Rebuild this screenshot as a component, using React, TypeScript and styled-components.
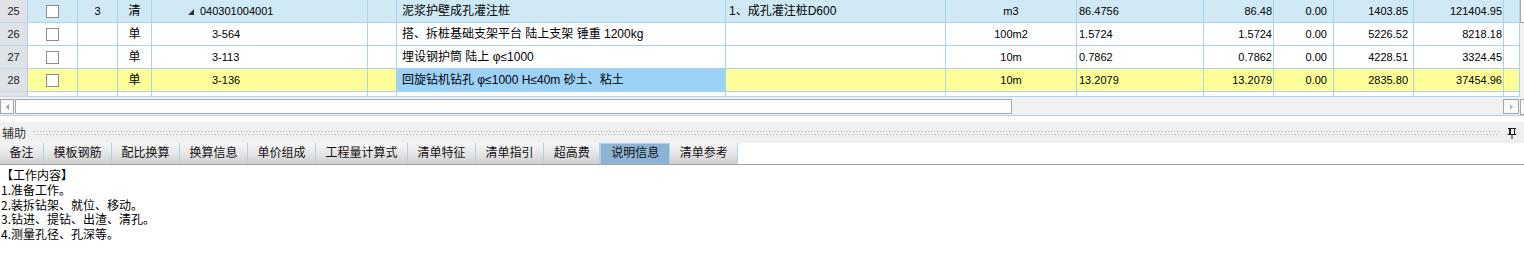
import * as React from 'react'
import styled, { createGlobalStyle, css } from 'styled-components'

type Align = 'left' | 'center' | 'right'
type RowKind = 'bill' | 'item' | 'current'

interface IRow {
  no: string
  seq?: string
  type: string
  code: string
  expand?: boolean
  name: string
  feature?: string
  unit: string
  qty: string
  amount: string
  diff: string
  price: string
  total: string
  kind: RowKind
  selectedName?: boolean
}

const ROWS: IRow[] = [
  {
    no: '25',
    seq: '3',
    type: '清',
    code: '040301004001',
    expand: true,
    name: '泥浆护壁成孔灌注桩',
    feature: '1、成孔灌注桩D600',
    unit: 'm3',
    qty: '86.4756',
    amount: '86.48',
    diff: '0.00',
    price: '1403.85',
    total: '121404.95',
    kind: 'bill'
  },
  {
    no: '26',
    type: '单',
    code: '3-564',
    name: '搭、拆桩基础支架平台 陆上支架 锤重 1200kg',
    unit: '100m2',
    qty: '1.5724',
    amount: '1.5724',
    diff: '0.00',
    price: '5226.52',
    total: '8218.18',
    kind: 'item'
  },
  {
    no: '27',
    type: '单',
    code: '3-113',
    name: '埋设钢护筒 陆上 φ≤1000',
    unit: '10m',
    qty: '0.7862',
    amount: '0.7862',
    diff: '0.00',
    price: '4228.51',
    total: '3324.45',
    kind: 'item'
  },
  {
    no: '28',
    type: '单',
    code: '3-136',
    name: '回旋钻机钻孔 φ≤1000 H≤40m 砂土、粘土',
    unit: '10m',
    qty: '13.2079',
    amount: '13.2079',
    diff: '0.00',
    price: '2835.80',
    total: '37454.96',
    kind: 'current',
    selectedName: true
  }
]

const TABS = [
  '备注',
  '模板钢筋',
  '配比换算',
  '换算信息',
  '单价组成',
  '工程量计算式',
  '清单特征',
  '清单指引',
  '超高费',
  '说明信息',
  '清单参考'
]

const NOTES = [
  '【工作内容】',
  '1.准备工作。',
  '2.装拆钻架、就位、移动。',
  '3.钻进、提钻、出渣、清孔。',
  '4.测量孔径、孔深等。'
]

const GRID_LINE = '#a9d4f1'
const COLS =
  '28px 50px 40px 34px 216px 29px 329px 220px 131px 127px 70px 60px 80px 90px 16px'

class App extends React.Component {
  public render() {
    return (
      <Layout>
        <GlobalStyle />
        <GridPanel>
          <GridBody>
            {ROWS.map(row => (
              <Row key={row.no} $kind={row.kind}>
                <HeadCell>{row.no}</HeadCell>
                <Cell $align="center">
                  <CheckBox />
                </Cell>
                <Cell $align="center" $num>
                  {row.seq}
                </Cell>
                <Cell $align="center">{row.type}</Cell>
                <Cell $pad={row.expand ? 36 : 60} $num>
                  {row.expand && <Expander />}
                  {row.code}
                </Cell>
                <Cell />
                <Cell $pad={5} $selected={row.selectedName}>
                  {row.name}
                </Cell>
                <Cell $pad={3}>{row.feature}</Cell>
                <Cell $align="center" $num>
                  {row.unit}
                </Cell>
                <Cell $pad={2} $num>
                  {row.qty}
                </Cell>
                <Cell $align="right" $pad={1} $num>
                  {row.amount}
                </Cell>
                <Cell $align="right" $pad={6} $num>
                  {row.diff}
                </Cell>
                <Cell $align="right" $pad={5} $num>
                  {row.price}
                </Cell>
                <Cell $align="right" $pad={1} $num>
                  {row.total}
                </Cell>
                <Cell />
              </Row>
            ))}
            <PartialRow $kind="item">
              <HeadCell />
              {Array.from({ length: 14 }).map((_, i) => (
                <Cell key={i} />
              ))}
            </PartialRow>
            <HScroll>
              <ScrollButton>
                <Arrow $dir="left" />
              </ScrollButton>
              <Thumb />
              <Track />
              <ScrollButton $wide>
                <Arrow $dir="right" />
              </ScrollButton>
            </HScroll>
          </GridBody>
          <VScroll>
            <VButton />
            <VTrack />
            <VButton $short />
          </VScroll>
        </GridPanel>

        <AuxBar>
          <AuxTitle>辅助</AuxTitle>
          <Grip />
          <Pin width="10" height="11" viewBox="0 0 10 11">
            <path d="M1 0.5H9" stroke="#222" />
            <path d="M2.5 1V6.5M3.5 1V6.5M7.5 1V6.5" stroke="#222" />
            <path d="M0.5 6.5H9.5" stroke="#222" />
            <path d="M5 7V11" stroke="#222" />
          </Pin>
        </AuxBar>

        <TabBar>
          {TABS.map(tab => (
            <Tab key={tab} $active={tab === '说明信息'}>
              {tab}
            </Tab>
          ))}
        </TabBar>

        <Notes>
          {NOTES.map(line => (
            <NoteLine key={line}>{line}</NoteLine>
          ))}
        </Notes>
      </Layout>
    )
  }
}

const GlobalStyle = createGlobalStyle`
  html, body {
    margin: 0;
    padding: 0;
    background: #fff;
  }
  body {
    font-family: "Liberation Sans", "Noto Sans CJK SC", sans-serif;
    font-size: 12px;
    color: #000;
  }
`

const Layout = styled.div`
  width: 1524px;
  height: 273px;
  overflow: hidden;

  /* flex parent */
  display: flex;
  flex-direction: column;
`

const GridPanel = styled.div`
  border-bottom: 1px solid ${GRID_LINE};

  /* flex parent */
  display: flex;
  flex-direction: row;
`

const GridBody = styled.div`
  width: 1520px;

  display: flex;
  flex-direction: column;
`

const rowBg = {
  bill: '#cfe9f7',
  item: '#ffffff',
  current: '#ffff99'
}

const Row = styled.div<{ $kind: RowKind }>`
  display: grid;
  grid-template-columns: ${COLS};
  height: 23px;
  background: ${p => rowBg[p.$kind]};
`

const PartialRow = styled(Row)`
  height: 5px;
  overflow: hidden;
`

const Cell = styled.div<{
  $align?: Align
  $pad?: number
  $num?: boolean
  $selected?: boolean
}>`
  box-sizing: border-box;
  border-right: 1px solid ${GRID_LINE};
  border-bottom: 1px solid ${GRID_LINE};
  padding: 0 ${p => (p.$align === 'right' ? p.$pad || 0 : 0)}px 0
    ${p => (p.$align === 'right' ? 0 : p.$pad || 0)}px;
  font-size: ${p => (p.$num ? '11px' : '12px')};
  line-height: 16px;
  white-space: nowrap;
  overflow: hidden;

  display: flex;
  align-items: center;
  justify-content: ${p =>
    p.$align === 'center'
      ? 'center'
      : p.$align === 'right'
      ? 'flex-end'
      : 'flex-start'};

  ${p =>
    p.$selected &&
    css`
      background: #9dd2f8;
    `}
`

const HeadCell = styled.div`
  box-sizing: border-box;
  background: #dfe2e7;
  border-right: 1px solid #b7cbe0;
  border-bottom: 1px solid #c9d6e3;
  font-size: 11px;
  color: #222;

  display: flex;
  align-items: center;
  justify-content: center;
`

const CheckBox = styled.span`
  box-sizing: border-box;
  width: 13px;
  height: 13px;
  background: #fff;
  border: 1px solid #8c8c8c;
`

const Expander = styled.span`
  width: 0;
  height: 0;
  margin: 1px 6px 0 0;
  border-left: 6px solid transparent;
  border-bottom: 6px solid #333;
`

const HScroll = styled.div`
  height: 18px;
  box-sizing: border-box;
  padding-top: 2px;
  background: #f1f1f1;

  display: flex;
  flex-direction: row;
  align-items: flex-start;
`

const ScrollButton = styled.div<{ $wide?: boolean }>`
  box-sizing: border-box;
  width: ${p => (p.$wide ? 16 : 14)}px;
  height: 15px;
  margin-right: 1px;
  background: #fafafa;
  border: 1px solid #a6a6a6;

  display: flex;
  align-items: center;
  justify-content: center;
`

const Arrow = styled.span<{ $dir: 'left' | 'right' }>`
  width: 0;
  height: 0;
  border-top: 3px solid transparent;
  border-bottom: 3px solid transparent;
  ${p =>
    p.$dir === 'left'
      ? css`
          border-right: 3px solid #9a9a9a;
        `
      : css`
          border-left: 3px solid #b8b8b8;
        `}
`

const Thumb = styled.div`
  box-sizing: border-box;
  width: 997px;
  height: 15px;
  background: #fff;
  border: 1px solid #a8a8a8;
`

const Track = styled.div`
  flex: 1;
`

const VScroll = styled.div`
  width: 4px;
  background: #f1f1f1;

  display: flex;
  flex-direction: column;
`

const VButton = styled.div<{ $short?: boolean }>`
  height: ${p => (p.$short ? 14 : 22)}px;
  margin-top: ${p => (p.$short ? 0 : 0)}px;
  background: #fafafa;
  border-left: 1px solid #a6a6a6;
  border-top: ${p => (p.$short ? '1px solid #a6a6a6' : 'none')};
  border-bottom: 1px solid #a6a6a6;
`

const VTrack = styled.div`
  flex: 1;
`

const AuxBar = styled.div`
  height: 21px;
  margin-top: 6px;
  padding: 0 7px 0 2px;
  background: #f0f0f0;

  display: flex;
  flex-direction: row;
  align-items: center;
`

const AuxTitle = styled.span`
  font-size: 12px;
  color: #333;
`

const Grip = styled.div`
  flex: 1;
  height: 4px;
  margin: 1px 8px 0 8px;
  background: repeating-linear-gradient(
        90deg,
        #b4b4b4 0 1px,
        transparent 1px 3px
      )
      0 0 / 100% 1px no-repeat,
    repeating-linear-gradient(90deg, #b4b4b4 0 1px, transparent 1px 3px) 1px
      3px / 100% 1px no-repeat;
`

const Pin = styled.svg`
  flex: 0 0 auto;
  margin-top: 1px;
`

const TabBar = styled.div`
  height: 21px;
  border-bottom: 1px solid #a3a3a3;

  display: flex;
  flex-direction: row;
`

const Tab = styled.div<{ $active?: boolean }>`
  box-sizing: border-box;
  padding: 0 9.5px;
  line-height: 20px;
  font-size: 12px;
  color: #111;
  background: linear-gradient(#f6f6f6, #e4e4e4 55%, #cdcdcd);
  border-right: 1px solid ${GRID_LINE};
  white-space: nowrap;

  ${p =>
    p.$active &&
    css`
      background: #8db3d4;
      border: 1px solid ${GRID_LINE};
      border-bottom: none;
      line-height: 19px;
      padding: 0 10px;
    `}
`

const Notes = styled.div`
  padding: 3px 1px 0 1px;
`

const NoteLine = styled.div`
  font-family: "Noto Sans CJK SC", "Liberation Sans", sans-serif;
  font-size: 12px;
  line-height: 14.75px;
  white-space: nowrap;
`

export default App
